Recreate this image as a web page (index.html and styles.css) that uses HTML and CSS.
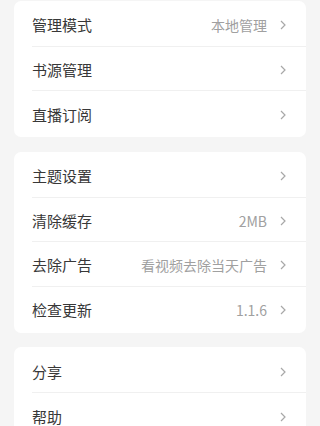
FILE: index.html
```html
<!DOCTYPE html>
<html lang="zh-CN">
<head>
<meta charset="utf-8">
<link rel="stylesheet" href="styles.css">
</head>
<body>
<div class="page">
  <div class="card first">
    <div class="row"><span class="label">管理模式</span><span class="value">本地管理</span><svg class="chev" viewBox="0 0 6 10"><path d="M1 1 L5 5 L1 9"/></svg></div>
    <div class="row"><span class="label">书源管理</span><svg class="chev" viewBox="0 0 6 10"><path d="M1 1 L5 5 L1 9"/></svg></div>
    <div class="row"><span class="label">直播订阅</span><svg class="chev" viewBox="0 0 6 10"><path d="M1 1 L5 5 L1 9"/></svg></div>
  </div>
  <div class="card">
    <div class="row"><span class="label">主题设置</span><svg class="chev" viewBox="0 0 6 10"><path d="M1 1 L5 5 L1 9"/></svg></div>
    <div class="row"><span class="label">清除缓存</span><span class="value">2MB</span><svg class="chev" viewBox="0 0 6 10"><path d="M1 1 L5 5 L1 9"/></svg></div>
    <div class="row"><span class="label">去除广告</span><span class="value">看视频去除当天广告</span><svg class="chev" viewBox="0 0 6 10"><path d="M1 1 L5 5 L1 9"/></svg></div>
    <div class="row"><span class="label">检查更新</span><span class="value">1.1.6</span><svg class="chev" viewBox="0 0 6 10"><path d="M1 1 L5 5 L1 9"/></svg></div>
  </div>
  <div class="card">
    <div class="row"><span class="label">分享</span><svg class="chev" viewBox="0 0 6 10"><path d="M1 1 L5 5 L1 9"/></svg></div>
    <div class="row"><span class="label">帮助</span><svg class="chev" viewBox="0 0 6 10"><path d="M1 1 L5 5 L1 9"/></svg></div>
  </div>
</div>
</body>
</html>
```
FILE: styles.css
```css
html, body {
  margin: 0;
  padding: 0;
  background: #f5f5f5;
  font-family: "Noto Sans CJK SC", "Noto Sans", sans-serif;
}
.page {
  padding: 0 14px;
  display: flex;
  flex-direction: column;
  gap: 14.5px;
}
.card {
  background: #ffffff;
  border-radius: 7px;
  padding: 1.5px 0;
}
.card.first {
  margin-top: 0.5px;
}
.row {
  box-sizing: border-box;
  height: 44.5px;
  padding-top: 3px;
  margin-left: 18px;
  padding-right: 20px;
  display: flex;
  align-items: center;
  border-bottom: 1px solid #f0f0f0;
}
.row:last-child {
  border-bottom: none;
}
.label {
  flex: 1;
  font-size: 15px;
  color: #383838;
  line-height: 20px;
}
.value {
  font-size: 14px;
  color: #a0a0a0;
  line-height: 20px;
  margin-right: 13px;
}
.chev {
  width: 6px;
  height: 10px;
  fill: none;
  stroke: #a8a8a8;
  stroke-width: 1.2;
}
```
